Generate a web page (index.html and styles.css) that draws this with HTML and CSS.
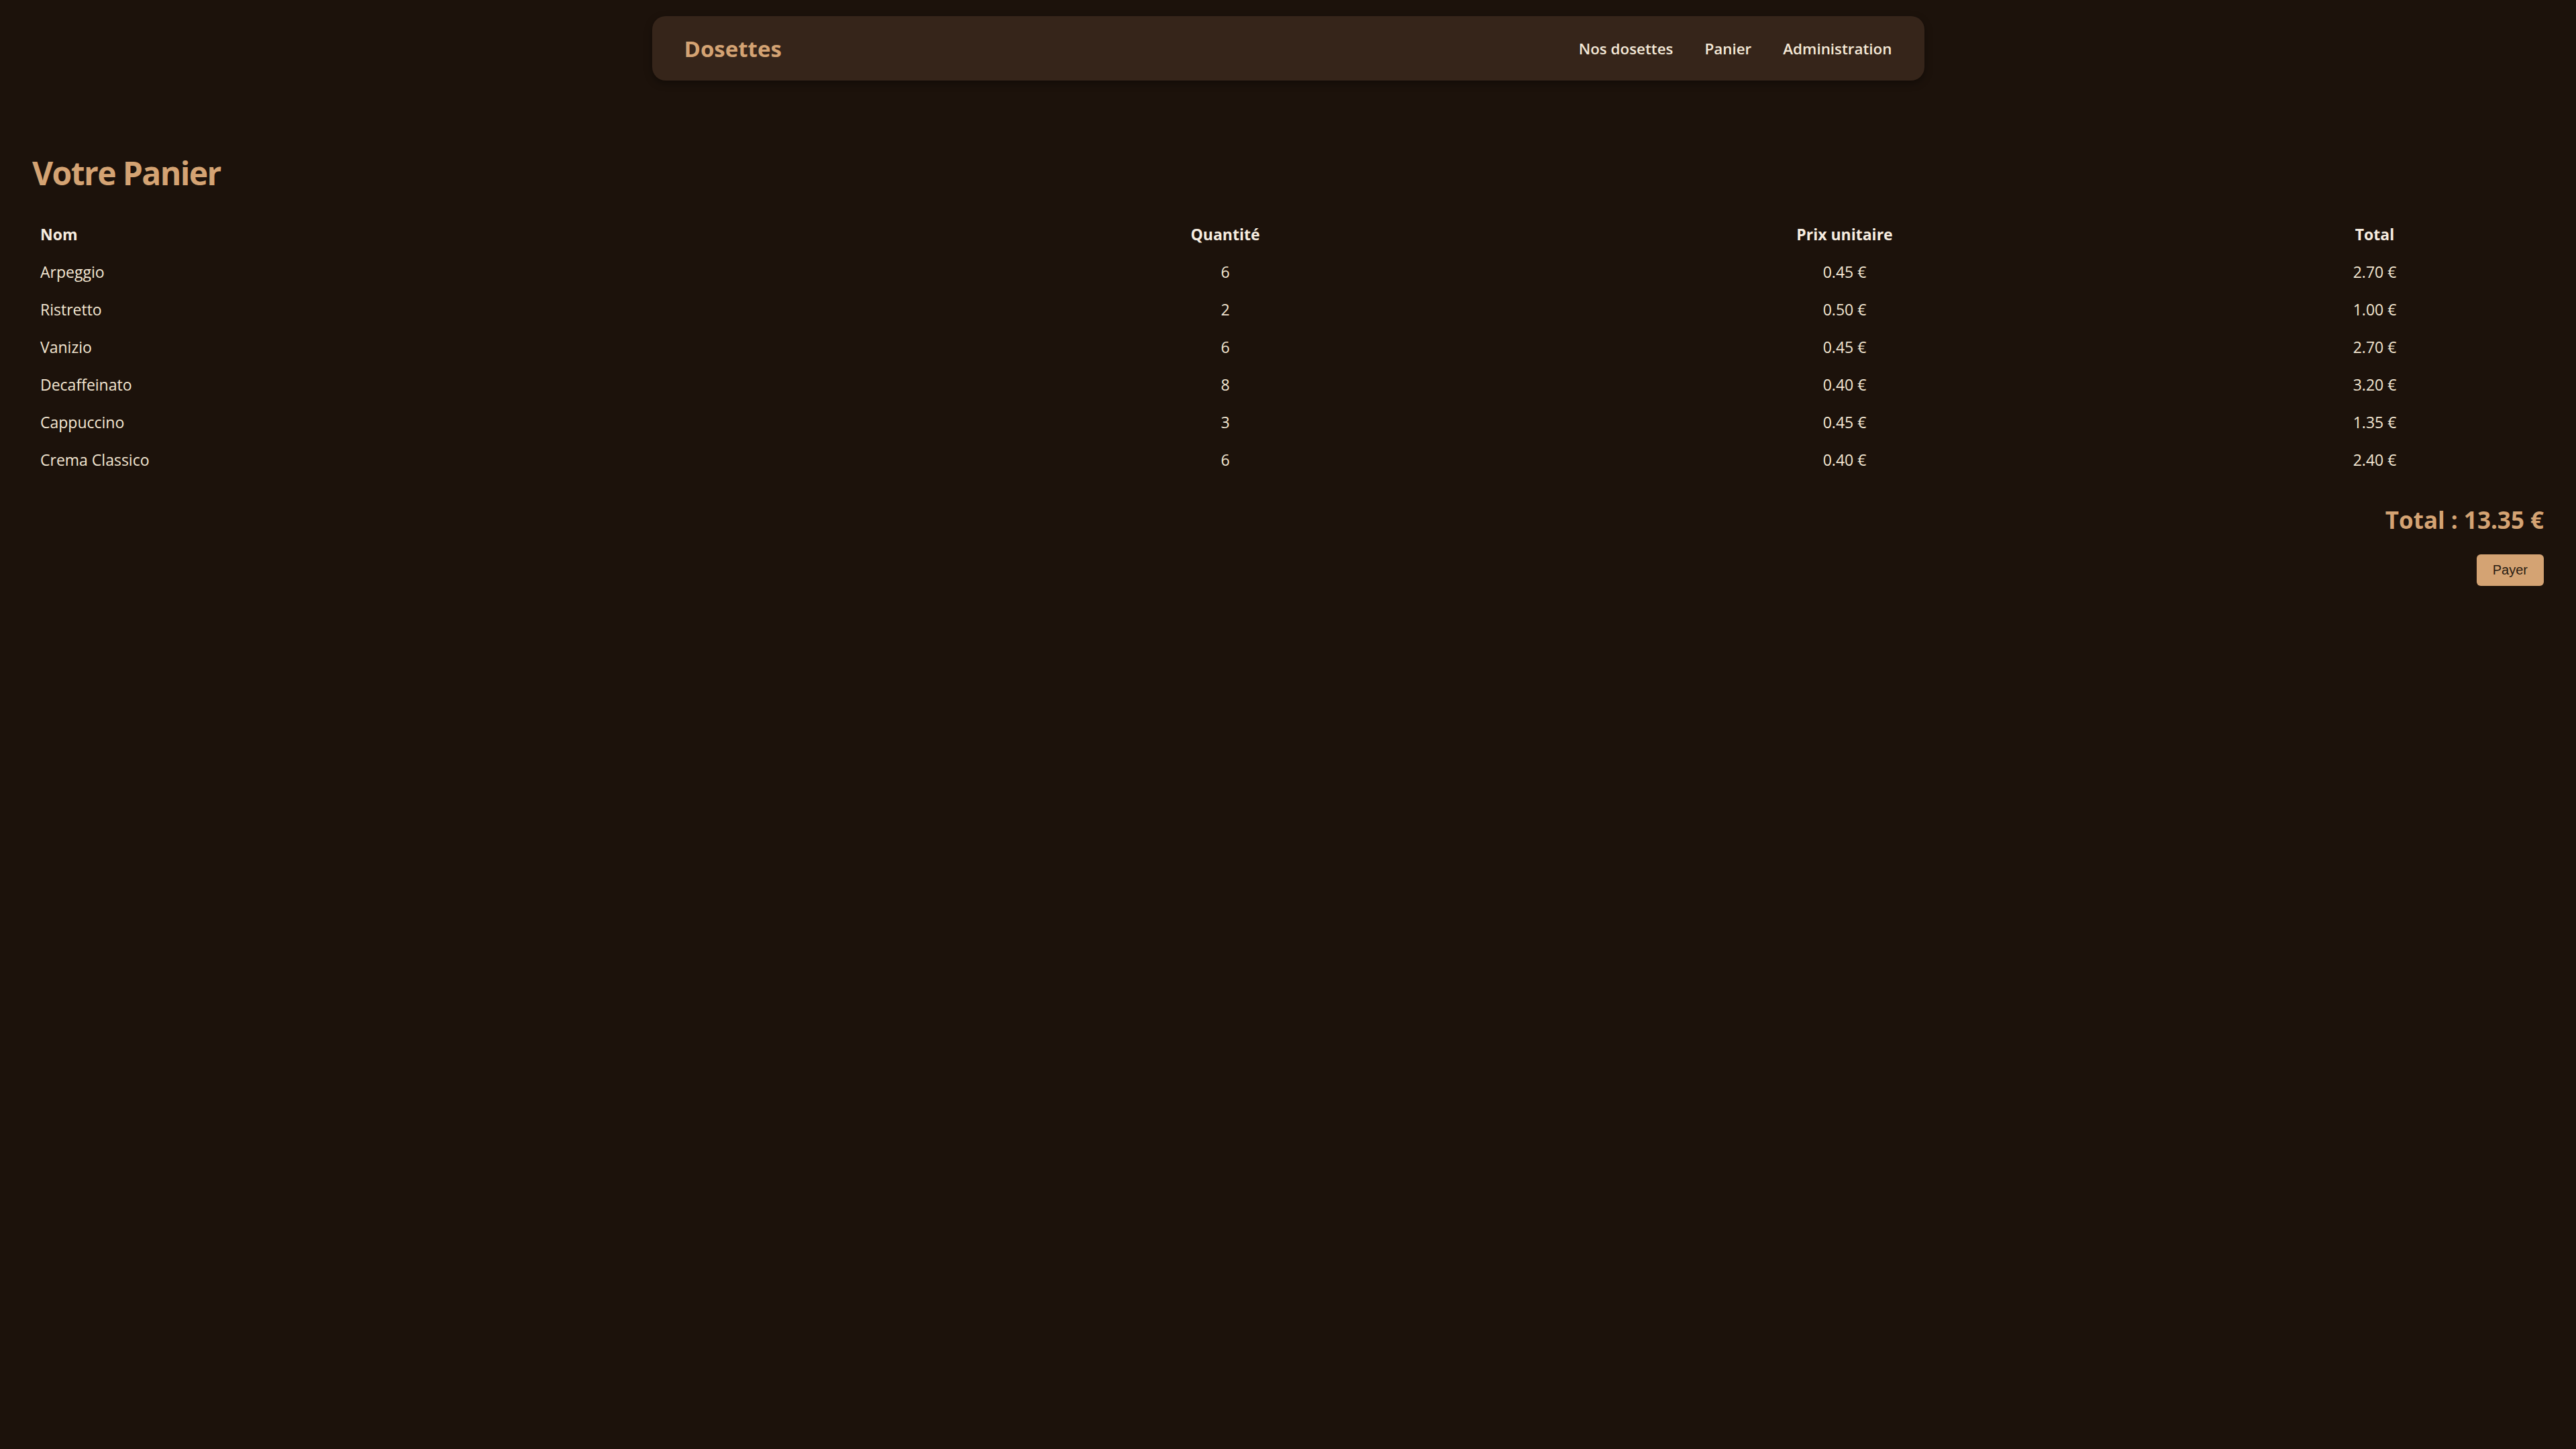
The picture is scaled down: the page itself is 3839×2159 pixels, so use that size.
FILE: index.html
```html
<!DOCTYPE html>
<html lang="fr">
<head>
<meta charset="utf-8">
<title>Votre Panier - Dosettes</title>
<link rel="stylesheet" href="styles.css">
</head>
<body>
<nav class="navbar">
  <div class="brand">Dosettes</div>
  <div class="links">
    <a class="link" href="#">Nos dosettes</a>
    <a class="link" href="#">Panier</a>
    <a class="link" href="#">Administration</a>
  </div>
</nav>
<main class="main">
  <h2 class="title">Votre Panier</h2>
  <table class="cart">
    <colgroup>
      <col class="c-name">
      <col class="c-qty">
      <col class="c-price">
      <col class="c-total">
    </colgroup>
    <thead>
      <tr><th class="left">Nom</th><th>Quantité</th><th>Prix unitaire</th><th>Total</th></tr>
    </thead>
    <tbody>
      <tr><td class="left">Arpeggio</td><td>6</td><td>0.45 €</td><td>2.70 €</td></tr>
      <tr><td class="left">Ristretto</td><td>2</td><td>0.50 €</td><td>1.00 €</td></tr>
      <tr><td class="left">Vanizio</td><td>6</td><td>0.45 €</td><td>2.70 €</td></tr>
      <tr><td class="left">Decaffeinato</td><td>8</td><td>0.40 €</td><td>3.20 €</td></tr>
      <tr><td class="left">Cappuccino</td><td>3</td><td>0.45 €</td><td>1.35 €</td></tr>
      <tr><td class="left">Crema Classico</td><td>6</td><td>0.40 €</td><td>2.40 €</td></tr>
    </tbody>
  </table>
  <div class="summary">
    <div class="grand">Total : 13.35 €</div>
    <button class="pay">Payer</button>
  </div>
</main>
</body>
</html>
```

FILE: styles.css
```css
html, body {
  margin: 0;
  padding: 0;
}
body {
  background: #1c120b;
  color: #f3e6d2;
  font-family: "Open Sans", "Noto Sans", sans-serif;
  font-size: 24px;
  min-height: 2159px;
}
.navbar {
  box-sizing: border-box;
  width: 1896px;
  height: 96px;
  margin: 24px auto 0;
  padding: 2px 48px 0;
  background: #36251a;
  border-radius: 20px;
  box-shadow: 0 4px 12px rgba(0, 0, 0, 0.35);
  display: flex;
  align-items: center;
  justify-content: space-between;
}
.brand {
  color: #d4a373;
  font-weight: 700;
  font-size: 33px;
  line-height: 48px;
}
.links {
  display: flex;
  gap: 47px;
}
.link {
  color: #f5e9d8;
  text-decoration: none;
  font-weight: 600;
  font-size: 22.4px;
  line-height: 32px;
}
.main {
  padding: 0 48px;
}
.title {
  margin: 106px 0 31px;
  color: #d4a373;
  font-weight: 700;
  font-size: 48px;
  line-height: 64px;
  letter-spacing: -1.6px;
}
.cart {
  width: 100%;
  table-layout: fixed;
  border-collapse: collapse;
}
.c-name { width: 1393px; }
.c-qty { width: 770px; }
.c-price { width: 1076px; }
.c-total { width: 504px; }
.cart th, .cart td {
  padding: 12px;
  line-height: 32px;
  text-align: center;
  font-size: 23px;
}
.cart th {
  font-weight: 700;
  color: #f7ede0;
}
.cart td {
  font-weight: 400;
}
.cart .left {
  text-align: left;
}
.summary {
  display: flex;
  flex-direction: column;
  align-items: flex-end;
  margin-top: 38px;
}
.grand {
  color: #d4a373;
  font-weight: 700;
  font-size: 35px;
  line-height: 48px;
}
.pay {
  margin-top: 27px;
  background: #d4a373;
  color: #2a1c12;
  border: none;
  border-radius: 6px;
  font-family: "Liberation Sans", Arial, sans-serif;
  font-size: 20px;
  line-height: 23px;
  padding: 12px 24px;
  cursor: pointer;
}
```
